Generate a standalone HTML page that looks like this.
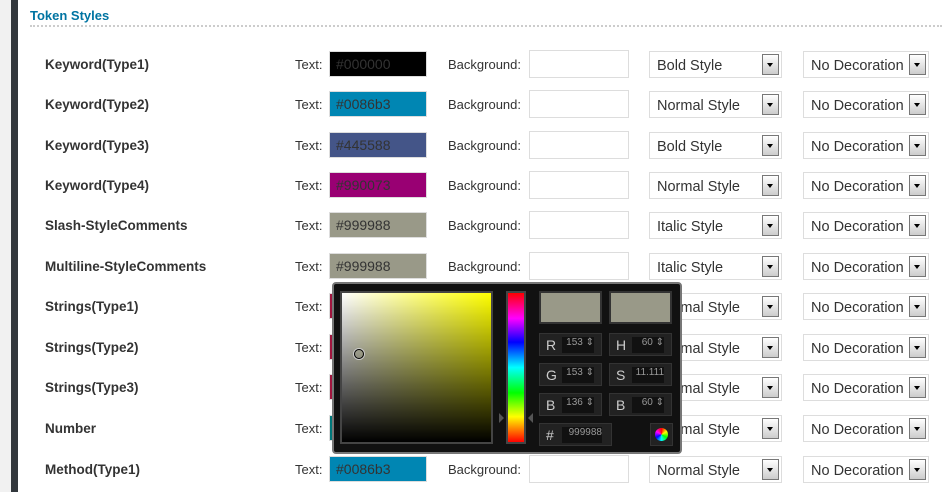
<!DOCTYPE html>
<html><head><style>
body{margin:0;width:942px;height:492px;overflow:hidden;background:#fff;font-family:"Liberation Sans",sans-serif;position:relative}
.g{position:absolute;left:0;top:0;width:11px;height:492px;background:#f1f1f1}
.d{position:absolute;left:11px;top:0;width:7px;height:492px;background:#32373c}
h3{position:absolute;left:30px;top:8px;margin:0;font-size:13px;color:#0074a2;font-weight:bold}
.hr{position:absolute;left:30px;right:0;top:25px;border-top:2px dotted #ccc}
.row{position:absolute;left:0;width:942px;height:30px}
.lb{position:absolute;left:45px;top:7px;font-size:13.5px;font-weight:bold;color:#333}
.tx{position:absolute;left:295px;top:7px;font-size:13px;color:#333}
.sw{position:absolute;left:329px;top:1px;width:98px;height:26px;box-sizing:border-box;border:1px solid #ddd;font-size:14px;color:#333;padding:4px 6px}
.bl{position:absolute;left:448px;top:7px;font-size:13px;color:#333}
.bg{position:absolute;left:529px;top:0;width:100px;height:28px;box-sizing:border-box;border:1px solid #ddd}
.s1,.s2{position:absolute;top:1px;height:27px;box-sizing:border-box;border:1px solid #ddd;font-size:14.5px;color:#333;padding:6px 7px 0}
.s1{left:649px;width:133px}.s2{left:803px;width:126px}
.ar{position:absolute;right:2px;top:2px;width:17px;height:21px;box-sizing:border-box;border:1px solid #777;background:linear-gradient(#fff,#ccc)}
.ar:after{content:"";position:absolute;left:4px;top:8px;border-left:3.5px solid transparent;border-right:3.5px solid transparent;border-top:4px solid #000}
.pk{position:absolute;left:332px;top:282px;width:350px;height:172px;box-sizing:border-box;background:#111;border:2px solid #777;border-radius:4px}
.pk div{position:absolute}
.f{background:#222;border:1px solid #333;color:#ccc;font-size:14px}
.f b{font-weight:normal;position:absolute;left:6px;top:3px}
.f i{font-style:normal;position:absolute;left:22px;top:3px;width:32px;height:16px;background:#111;color:#999;font-size:10px;text-align:right}
</style></head><body>
<div class="g"></div><div class="d"></div>
<h3>Token Styles</h3><div class="hr"></div>

<div class="row" style="top:50px"><div class="lb">Keyword(Type1)</div><div class="tx">Text:</div><div class="sw" style="background:#000;color:#333">#000000</div><div class="bl">Background:</div><div class="bg"></div><div class="s1">Bold Style<div class="ar"></div></div><div class="s2">No Decoration<div class="ar"></div></div></div>
<div class="row" style="top:90px"><div class="lb">Keyword(Type2)</div><div class="tx">Text:</div><div class="sw" style="background:#0086b3">#0086b3</div><div class="bl">Background:</div><div class="bg"></div><div class="s1">Normal Style<div class="ar"></div></div><div class="s2">No Decoration<div class="ar"></div></div></div>
<div class="row" style="top:131px"><div class="lb">Keyword(Type3)</div><div class="tx">Text:</div><div class="sw" style="background:#445588">#445588</div><div class="bl">Background:</div><div class="bg"></div><div class="s1">Bold Style<div class="ar"></div></div><div class="s2">No Decoration<div class="ar"></div></div></div>
<div class="row" style="top:171px"><div class="lb">Keyword(Type4)</div><div class="tx">Text:</div><div class="sw" style="background:#990073">#990073</div><div class="bl">Background:</div><div class="bg"></div><div class="s1">Normal Style<div class="ar"></div></div><div class="s2">No Decoration<div class="ar"></div></div></div>
<div class="row" style="top:211px"><div class="lb">Slash-StyleComments</div><div class="tx">Text:</div><div class="sw" style="background:#999988">#999988</div><div class="bl">Background:</div><div class="bg"></div><div class="s1">Italic Style<div class="ar"></div></div><div class="s2">No Decoration<div class="ar"></div></div></div>
<div class="row" style="top:252px"><div class="lb">Multiline-StyleComments</div><div class="tx">Text:</div><div class="sw" style="background:#999988">#999988</div><div class="bl">Background:</div><div class="bg"></div><div class="s1">Italic Style<div class="ar"></div></div><div class="s2">No Decoration<div class="ar"></div></div></div>
<div class="row" style="top:292px"><div class="lb">Strings(Type1)</div><div class="tx">Text:</div><div class="sw" style="background:#a0153e"></div><div class="bl">Background:</div><div class="bg"></div><div class="s1">Normal Style<div class="ar"></div></div><div class="s2">No Decoration<div class="ar"></div></div></div>
<div class="row" style="top:333px"><div class="lb">Strings(Type2)</div><div class="tx">Text:</div><div class="sw" style="background:#a0153e"></div><div class="bl">Background:</div><div class="bg"></div><div class="s1">Normal Style<div class="ar"></div></div><div class="s2">No Decoration<div class="ar"></div></div></div>
<div class="row" style="top:373px"><div class="lb">Strings(Type3)</div><div class="tx">Text:</div><div class="sw" style="background:#a0153e"></div><div class="bl">Background:</div><div class="bg"></div><div class="s1">Normal Style<div class="ar"></div></div><div class="s2">No Decoration<div class="ar"></div></div></div>
<div class="row" style="top:414px"><div class="lb">Number</div><div class="tx">Text:</div><div class="sw" style="background:#00787a"></div><div class="bl">Background:</div><div class="bg"></div><div class="s1">Normal Style<div class="ar"></div></div><div class="s2">No Decoration<div class="ar"></div></div></div>
<div class="row" style="top:455px"><div class="lb">Method(Type1)</div><div class="tx">Text:</div><div class="sw" style="background:#0086b3">#0086b3</div><div class="bl">Background:</div><div class="bg"></div><div class="s1">Normal Style<div class="ar"></div></div><div class="s2">No Decoration<div class="ar"></div></div></div>

<div class="pk">
<div style="left:6px;top:7px;width:153px;height:153px;box-sizing:border-box;border:2px solid #444;background:linear-gradient(to top,#000,rgba(0,0,0,0)),linear-gradient(to right,#fff,#ff0)"></div>
<div style="left:20px;top:65px;width:8px;height:8px;border:1px solid #000;border-radius:50%;box-shadow:0 0 0 1px #ccc"></div>
<div style="left:172px;top:7px;width:20px;height:153px;box-sizing:border-box;border:2px solid #444;background:linear-gradient(#f00,#f0f 17%,#00f 33%,#0ff 50%,#0f0 67%,#ff0 83%,#f00)"></div>
<div style="left:165px;top:129px;border-left:5px solid #555;border-top:5px solid transparent;border-bottom:5px solid transparent"></div>
<div style="left:194px;top:129px;border-right:5px solid #555;border-top:5px solid transparent;border-bottom:5px solid transparent"></div>
<div style="left:205px;top:7px;width:63px;height:33px;box-sizing:border-box;border:2px solid #333;background:#999988"></div>
<div style="left:275px;top:7px;width:63px;height:33px;box-sizing:border-box;border:2px solid #333;background:#999988"></div>
<div class="f" style="left:205px;top:49px;width:61px;height:21px"><b>R</b><i>153 ⇕</i></div>
<div class="f" style="left:275px;top:49px;width:61px;height:21px"><b>H</b><i>60 ⇕</i></div>
<div class="f" style="left:205px;top:79px;width:61px;height:21px"><b>G</b><i>153 ⇕</i></div>
<div class="f" style="left:275px;top:79px;width:61px;height:21px"><b>S</b><i>11.111</i></div>
<div class="f" style="left:205px;top:109px;width:61px;height:21px"><b>B</b><i>136 ⇕</i></div>
<div class="f" style="left:275px;top:109px;width:61px;height:21px"><b>B</b><i>60 ⇕</i></div>
<div class="f" style="left:205px;top:139px;width:71px;height:21px"><b>#</b><i style="width:40px">999988</i></div>
<div class="f" style="left:316px;top:139px;width:21px;height:21px"><div style="left:4px;top:4px;width:13px;height:13px;border-radius:50%;background:conic-gradient(#f00,#ff0,#0f0,#0ff,#00f,#f0f,#f00)"></div></div>
</div>
</body></html>
